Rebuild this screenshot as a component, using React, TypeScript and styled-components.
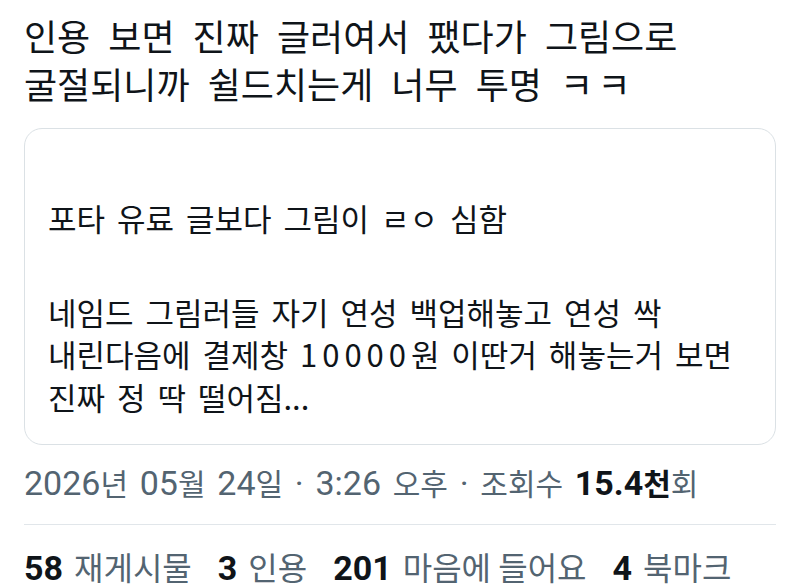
import { FC } from "react";
import styled, { createGlobalStyle } from "styled-components";

const GlobalStyle = createGlobalStyle`
  body {
    margin: 0;
    background: #ffffff;
  }
`;

const hangul = `"Noto Sans CJK KR", "Noto Sans", sans-serif`;
const latin = `Roboto, "Noto Sans CJK KR", sans-serif`;

const Page = styled.div`
  padding: 11px 24px 0;
  font-family: ${hangul};
  color: #0f1419;
`;

const Title = styled.h1`
  margin: 0;
  font-size: 36px;
  font-weight: 400;
  line-height: 48px;
  word-spacing: 10px;
`;

const Laugh = styled.span`
  letter-spacing: 0.12em;
`;

const QuoteCard = styled.div`
  margin-top: 21px;
  border: 1px solid #dbe1e5;
  border-radius: 18px;
  padding: 68px 23px 26px;
`;

const QuoteText = styled.p<{ $gap?: number }>`
  margin: ${(p) => p.$gap ?? 0}px 0 0;
  font-size: 31px;
  line-height: 42.5px;
  word-spacing: 5px;
`;

const Wide = styled.span`
  letter-spacing: 0.16em;
`;

const Meta = styled.div`
  margin-top: 17px;
  font-size: 30px;
  line-height: 40px;
  color: #536471;
  word-spacing: 5px;
`;

const Figure = styled.span`
  font-family: ${latin};
  font-size: 34px;
`;

const Strong = styled.span`
  font-weight: 700;
  color: #0f1419;
`;

const Divider = styled.hr`
  margin: 21px 0 0;
  border: 0;
  border-top: 1px solid #e1e6ea;
`;

const Stats = styled.div`
  margin-top: 21px;
  display: flex;
  align-items: baseline;
  gap: 26px;
  line-height: 40px;
`;

const Stat = styled.span`
  font-size: 32px;
  color: #536471;
  white-space: nowrap;
`;

const Count = styled.span`
  font-family: ${latin};
  font-size: 34px;
  font-weight: 700;
  color: #0f1419;
  margin-right: 11px;
`;

const withFigures = (text: string) =>
  text.split(/([0-9.:·]+)/).map((part, i) => (i % 2 === 1 ? <Figure key={i}>{part}</Figure> : part));

const stats = [
  { count: 58, label: "재게시물" },
  { count: 3, label: "인용" },
  { count: 201, label: "마음에 들어요" },
  { count: 4, label: "북마크" },
];

const App: FC = () => {
  return (
    <Page>
      <GlobalStyle />
      <Title>
        인용 보면 진짜 글러여서 팼다가 그림으로
        <br />
        굴절되니까 쉴드치는게 너무 투명 <Laugh>ㅋㅋ</Laugh>
      </Title>
      <QuoteCard>
        <QuoteText>포타 유료 글보다 그림이 ㄹㅇ 심함</QuoteText>
        <QuoteText $gap={51}>
          네임드 그림러들 자기 연성 백업해놓고 연성 싹
          <br />
          내린다음에 결제창 <Wide>10000</Wide>원 이딴거 해놓는거 보면
          <br />
          진짜 정 딱 떨어짐...
        </QuoteText>
      </QuoteCard>
      <Meta>
        {withFigures("2026년 05월 24일 · 3:26 오후 · 조회수 ")}
        <Strong>{withFigures("15.4천")}</Strong>회
      </Meta>
      <Divider />
      <Stats>
        {stats.map((s) => (
          <Stat key={s.label}>
            <Count>{s.count}</Count>
            {s.label}
          </Stat>
        ))}
      </Stats>
    </Page>
  );
};

export default App;
